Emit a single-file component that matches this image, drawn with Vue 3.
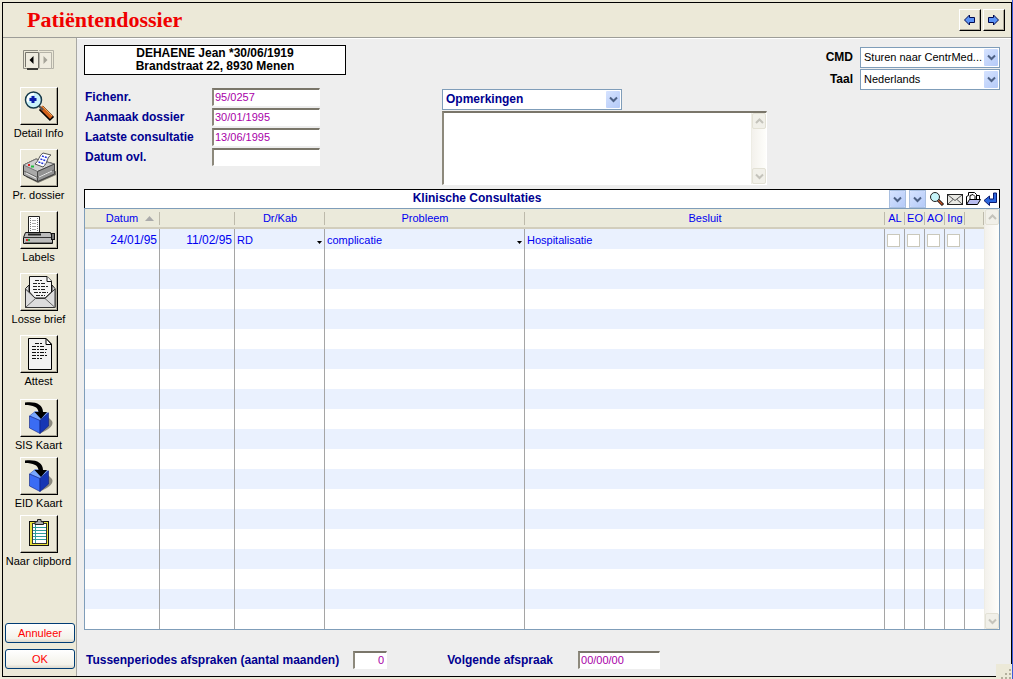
<script setup>
import { ref } from 'vue'

const cmd = ref('Sturen naar CentrMed...')
const taal = ref('Nederlands')
const topic = ref('Opmerkingen')
const notes = ref('')
const months = ref('0')
const nextVisit = ref('00/00/00')

const fields = ref([
  { id: 'fiche', label: 'Fichenr.', value: '95/0257' },
  { id: 'created', label: 'Aanmaak dossier', value: '30/01/1995' },
  { id: 'last', label: 'Laatste consultatie', value: '13/06/1995' },
  { id: 'ovl', label: 'Datum ovl.', value: '' },
])

const toolGroups = [
  [
    { icon: 'zoom', label: 'Detail Info' },
    { icon: 'printer', label: 'Pr. dossier' },
    { icon: 'labels', label: 'Labels' },
    { icon: 'letter', label: 'Losse brief' },
    { icon: 'page', label: 'Attest' },
  ],
  [
    { icon: 'cube', label: 'SIS Kaart' },
    { icon: 'cube', label: 'EID Kaart' },
    { icon: 'clip', label: 'Naar clipbord' },
  ],
]

const flags = ['AL', 'EO', 'AO', 'Ing']
const emptyRows = 19
</script>

<template>
  <div class="window">
    <div class="frame">
      <header class="titlebar">
        <h1>Patiëntendossier</h1>
        <div class="pager">
          <button class="raised" type="button" aria-label="Vorige">
            <svg width="14" height="14" viewBox="0 0 14 14"><path d="M1.500 7L6.500 2V4.500H11.500V9.500H6.500V12Z" fill="#5b93f5" stroke="#000a50" /></svg>
          </button>
          <button class="raised" type="button" aria-label="Volgende">
            <svg width="14" height="14" viewBox="0 0 14 14"><path d="M11.500 7L6.500 2V4.500H1.500V9.500H6.500V12Z" fill="#5b93f5" stroke="#000a50" /></svg>
          </button>
        </div>
      </header>

      <div class="body">
        <nav class="sidebar">
          <div class="book">
            <button type="button" aria-label="Vorige pagina">
              <svg width="16" height="20" viewBox="0 0 16 20">
                <path d="M15 .5H.5V18.500H4" fill="none" stroke="#8c8a80" />
                <path d="M2.500 17V2.500H15.500V18.500" fill="#efecdf" stroke="#77756c" />
                <path d="M4 19H15" stroke="#000" stroke-width="1.500" />
                <path d="M10.500 6V14L6.500 10Z" fill="#000" />
              </svg>
            </button>
            <button type="button" aria-label="Volgende pagina">
              <svg width="15" height="20" viewBox="0 0 15 20">
                <path d="M0 .5H14.500V18.500H11" fill="none" stroke="#b5b3a8" />
                <path d="M.5 18V2.500H12.500V18.500H.5" fill="#efecdf" stroke="#b5b3a8" />
                <path d="M4.500 6V14L8.500 10Z" fill="#a5a398" />
              </svg>
            </button>
          </div>

          <div v-for="(group, g) in toolGroups" :key="g" class="tools" :class="{ tight: g === 1 }">
            <div v-for="tool in group" :key="tool.label" class="tool">
              <button class="raised big" type="button" :aria-label="tool.label">
                <svg v-if="tool.icon === 'zoom'" width="36" height="36" viewBox="0 0 36 36">
                  <path d="M20 20L31 31" stroke="#000" stroke-width="6" />
                  <path d="M20 19L30.500 29.500" stroke="#d2601a" stroke-width="4" />
                  <path d="M21.500 18.500L31 28" stroke="#f6a04a" />
                  <path d="M17 17L22 22" stroke="#555" stroke-width="2" />
                  <circle cx="12.500" cy="12" r="8" fill="#c9f2fb" stroke="#16394a" stroke-width="1.500" />
                  <path d="M7 14A6 6 0 0 1 13 6" fill="none" stroke="#fff" stroke-width="2" />
                  <path d="M12 8V15M8.500 11.500H15.500" stroke="#0a1caa" stroke-width="3" />
                </svg>
                <svg v-else-if="tool.icon === 'printer'" width="36" height="36" viewBox="0 0 36 36">
                  <path d="M5 27L17 33L35 25V21Z" fill="#77756c" />
                  <path d="M2.500 15L15 9L33.500 14V24L16.500 31.500L2.500 25Z" fill="#a9a9a9" stroke="#333" />
                  <path d="M2.500 15L15 9L33.500 14L16.500 21.500Z" fill="#d0d0d0" stroke="#777" />
                  <path d="M16.500 21.500V31.500L33.500 24V14Z" fill="#929292" stroke="#444" />
                  <path d="M3 21L16.500 27.500L33 20" fill="none" stroke="#666" />
                  <path d="M5 23L15 28M18 27L31 21" stroke="#eee" />
                  <path d="M14 14C18 11 18 5 22 3L30 5C26 7 27 13 22 17Z" fill="#fff" stroke="#555" />
                  <path d="M21 6L27 8M19.500 9L25.500 11M17.500 12L23.500 14" stroke="#2434d8" stroke-width="1.500" stroke-dasharray="2 1" />
                  <path d="M7 15H9" stroke="#e02020" stroke-width="2" />
                  <path d="M10 16.500H13" stroke="#20c040" stroke-width="2" />
                </svg>
                <svg v-else-if="tool.icon === 'labels'" width="36" height="36" viewBox="0 0 36 36">
                  <path d="M7.500 21V4.500H18.500V21" fill="#fff" stroke="#222" />
                  <path d="M9.500 6V20M16.500 6V20" stroke="#777" stroke-dasharray="1 1" />
                  <path d="M11 8.500H15M11 11.500H15M11 14.500H15M11 17.500H15" stroke="#aaa" />
                  <path d="M4.500 20.500H29.500L31.500 25.500V31.500H2.500V25.500Z" fill="#bcbcbc" stroke="#111" />
                  <path d="M3 25.500H31" stroke="#333" />
                  <path d="M7 22.500H20" stroke="#222" stroke-width="2" />
                  <path d="M4 30.500H31" stroke="#777" />
                  <rect x="30.500" y="21.500" width="3" height="6" fill="#777" stroke="#111" />
                  <path d="M5 28H7" stroke="#e02020" stroke-width="2" />
                  <path d="M7 28H9" stroke="#20b040" stroke-width="2" />
                </svg>
                <svg v-else-if="tool.icon === 'letter'" width="36" height="36" viewBox="0 0 36 36">
                  <path d="M4.500 14.500L8 11V25H31V11L34 14.500V33.500H4.500Z" fill="#d8d8d8" stroke="#222" />
                  <path d="M8.500 18V2.500H26L30.500 7V18L24 24H14Z" fill="#f4f4f4" stroke="#111" />
                  <path d="M26 2.500V7.500H30.500" fill="#fff" stroke="#111" />
                  <path d="M14 6.500H22M12 9.500H24M12 12.500H27M12 15.500H25M13 18.500H27M15 21.500H24" stroke="#222" stroke-dasharray="4 1 2 1" />
                  <path d="M4.500 15L14.500 24.500H24L34 15V33.500H4.500Z" fill="#dcdcdc" stroke="#333" />
                  <path d="M5 33L14.500 24.500M33.500 33L24 24.500" stroke="#666" />
                </svg>
                <svg v-else-if="tool.icon === 'page'" width="36" height="36" viewBox="0 0 36 36">
                  <path d="M7.500 2.500H25L30.500 8V33.500H7.500Z" fill="#f1f1f1" stroke="#000" />
                  <path d="M25 2.500V8.500H30.500Z" fill="#fff" stroke="#000" />
                  <path d="M14 7.500H22M11 10.500H23M11 13.500H27M11 16.500H25M11 19.500H27M11 22.500H21" stroke="#111" stroke-dasharray="4 1 2 1" />
                </svg>
                <svg v-else-if="tool.icon === 'cube'" width="36" height="36" viewBox="0 0 36 36">
                  <path d="M26 16L31 21C33 25 29 29 20 33Z" fill="#8b897e" />
                  <path d="M8.500 16L14 11.500L27.500 13L19 20.500Z" fill="#79a8ff" stroke="#1a3cae" stroke-width=".5" />
                  <path d="M8.500 16L19 20.500V33.500L8.500 28Z" fill="#3a6cf4" stroke="#0b1f80" stroke-width=".6" />
                  <path d="M19 20.500L27.500 13V26L19 33.500Z" fill="#1636b4" stroke="#0b1f80" stroke-width=".6" />
                  <path d="M4 2.500C14 1 22 4 22 12H26L20 19L13.500 12H17.500C17 7 12 5 4 5Z" fill="#000" />
                </svg>
                <svg v-else width="36" height="36" viewBox="0 0 36 36">
                  <rect x="8.500" y="5.500" width="19" height="24" fill="#e8e03a" stroke="#111" />
                  <rect x="11.500" y="7.500" width="14" height="20" fill="#fff" stroke="#333" />
                  <path d="M12 11.500H25M12 14.500H25M12 17.500H25M12 20.500H25M12 23.500H25" stroke="#2f9c9c" />
                  <path d="M14.500 8V27" stroke="#2f9c9c" />
                  <path d="M14 8.500V6L16.500 5.500V3.500H20V5.500L22.500 6V8.500Z" fill="#aaa" stroke="#222" />
                </svg>
              </button>
              <span class="caption">{{ tool.label }}</span>
            </div>
          </div>

          <div class="actions">
            <button type="button">Annuleer</button>
            <button type="button">OK</button>
          </div>
        </nav>

        <main class="content">
          <section class="top">
            <div class="left">
              <div class="patient">DEHAENE Jean *30/06/1919<br>Brandstraat 22, 8930 Menen</div>
              <div class="fields">
                <div v-for="f in fields" :key="f.id" class="field">
                  <label :for="f.id">{{ f.label }}</label>
                  <input :id="f.id" v-model="f.value" class="sunken" type="text">
                </div>
              </div>
            </div>

            <div class="remarks">
              <div class="combo bold">
                <select v-model="topic" aria-label="Rubriek"><option>Opmerkingen</option></select>
                <span class="drop"><svg width="9" height="7" viewBox="0 0 9 7"><path d="M1 1.500L4.500 5L8 1.500" /></svg></span>
              </div>
              <div class="memo">
                <textarea v-model="notes" aria-label="Opmerkingen"></textarea>
                <div class="scroll">
                  <button type="button" aria-label="Omhoog"><svg width="9" height="7" viewBox="0 0 9 7"><path d="M1 5L4.500 1.500L8 5" /></svg></button>
                  <button type="button" aria-label="Omlaag"><svg width="9" height="7" viewBox="0 0 9 7"><path d="M1 1.500L4.500 5L8 1.500" /></svg></button>
                </div>
              </div>
            </div>

            <div class="settings">
              <label for="cmd">CMD</label>
              <div class="combo">
                <select id="cmd" v-model="cmd"><option>Sturen naar CentrMed...</option></select>
                <span class="drop"><svg width="9" height="7" viewBox="0 0 9 7"><path d="M1 1.500L4.500 5L8 1.500" /></svg></span>
              </div>
              <label for="taal">Taal</label>
              <div class="combo">
                <select id="taal" v-model="taal"><option>Nederlands</option></select>
                <span class="drop"><svg width="9" height="7" viewBox="0 0 9 7"><path d="M1 1.500L4.500 5L8 1.500" /></svg></span>
              </div>
            </div>
          </section>

          <section class="consults">
            <div class="caption-bar">
              <h2>Klinische Consultaties</h2>
              <div class="icons">
                <button v-for="n in 2" :key="n" type="button" class="menu" :aria-label="'Menu ' + n">
                  <span class="drop"><svg width="9" height="7" viewBox="0 0 9 7"><path d="M1 1.500L4.500 5L8 1.500" /></svg></span>
                </button>
                <button type="button" aria-label="Zoeken">
                  <svg width="16" height="16" viewBox="0 0 16 16">
                    <path d="M9 9L14 14" stroke="#000" stroke-width="3" /><path d="M9 9L13.500 13.500" stroke="#c8562a" stroke-width="1.500" />
                    <circle cx="6" cy="6" r="4.500" fill="#c5f4fa" stroke="#222" />
                  </svg>
                </button>
                <button type="button" aria-label="Mail">
                  <svg width="16" height="16" viewBox="0 0 16 16">
                    <rect x=".5" y="3.500" width="15" height="10" fill="#e9e9e4" stroke="#222" />
                    <path d="M1 4L8 9.500L15 4M1 13L6 8.500M15 13L10 8.500" fill="none" stroke="#555" />
                  </svg>
                </button>
                <button type="button" aria-label="Map">
                  <svg width="16" height="16" viewBox="0 0 16 16">
                    <path d="M1.500 13.500V5.500L3.500 4.500V1.500H9.500L11.500 3.500V8" fill="#fff" stroke="#000" />
                    <path d="M5 6.500V4.500L8 3.500L10 5.500V9H5Z" fill="#fff" stroke="#000" />
                    <path d="M1.500 13.500L4.500 8.500H15.500L12.500 13.500Z" fill="#b9bdf0" stroke="#000" />
                    <path d="M12 4.500H14.500V8" fill="none" stroke="#000" />
                  </svg>
                </button>
                <button type="button" aria-label="Terug">
                  <svg width="16" height="16" viewBox="0 0 16 16">
                    <path d="M1 9.500L6.500 5V8H10.500V2H13.500V11.500H6.500V14.500Z" fill="#2b66dd" stroke="#0a1a70" />
                  </svg>
                </button>
              </div>
            </div>

            <div class="grid">
              <table>
                <colgroup>
                  <col class="c-date"><col class="c-date"><col class="c-dr"><col class="c-prob"><col>
                  <col v-for="n in 4" :key="n" class="c-flag"><col class="c-end">
                </colgroup>
                <thead>
                  <tr>
                    <th class="sorted">Datum <svg class="sort" width="9" height="5" viewBox="0 0 9 5"><path d="M0 5L4.500 0L9 5Z" fill="#aaa" /></svg></th>
                    <th></th>
                    <th>Dr/Kab</th>
                    <th>Probleem</th>
                    <th>Besluit</th>
                    <th v-for="f in flags" :key="f">{{ f }}</th>
                    <th></th>
                  </tr>
                </thead>
                <tbody>
                  <tr>
                    <td class="num">24/01/95</td>
                    <td class="num">11/02/95</td>
                    <td><div class="pick">RD <svg width="5" height="3" viewBox="0 0 5 3"><path d="M0 0H5L2.500 3Z" /></svg></div></td>
                    <td><div class="pick">complicatie <svg width="5" height="3" viewBox="0 0 5 3"><path d="M0 0H5L2.500 3Z" /></svg></div></td>
                    <td>Hospitalisatie</td>
                    <td v-for="f in flags" :key="f" class="flag"><input type="checkbox" :aria-label="f"></td>
                    <td></td>
                  </tr>
                  <tr v-for="r in emptyRows" :key="r">
                    <td v-for="c in 10" :key="c"></td>
                  </tr>
                </tbody>
              </table>
              <div class="scroll">
                <button type="button" aria-label="Omhoog"><svg width="9" height="7" viewBox="0 0 9 7"><path d="M1 5L4.500 1.500L8 5" /></svg></button>
                <button type="button" aria-label="Omlaag"><svg width="9" height="7" viewBox="0 0 9 7"><path d="M1 1.500L4.500 5L8 1.500" /></svg></button>
              </div>
            </div>
          </section>

          <footer class="bottom">
            <label for="months">Tussenperiodes afspraken (aantal maanden)</label>
            <input id="months" v-model="months" class="sunken months" type="text">
            <label for="next">Volgende afspraak</label>
            <input id="next" v-model="nextVisit" class="sunken next" type="text">
          </footer>
        </main>
      </div>
    </div>
    <svg class="grip" width="16" height="15" viewBox="0 0 16 15">
      <path d="M13 5h2v2h-2zM9 9h2v2h-2zM13 9h2v2h-2zM5 13h2v2h-2zM9 13h2v2h-2zM13 13h2v2h-2z" fill="#b3af9c" />
    </svg>
  </div>
</template>

<style>
body {
  background: #ece9d8;
}
</style>

<style scoped>
.window,
.window * {
  box-sizing: border-box;
}

.window {
  position: relative;
  display: flex;
  min-height: 100vh;
  padding: 2px 0 2px 2px;
  border-right: 1px solid #3c5bd8;
  background: #ece9d8;
  font-family: "Liberation Sans", Arial, sans-serif;
  font-size: 11px;
  line-height: 13px;
  color: #000;
}

button,
input,
select,
textarea {
  margin: 0;
  padding: 0;
  border: 0;
  border-radius: 0;
  background: none;
  font: inherit;
  color: inherit;
}

svg {
  display: block;
}

.frame {
  flex: 1;
  display: flex;
  flex-direction: column;
  border: 1px solid #000;
}

.titlebar {
  display: flex;
  justify-content: space-between;
  align-items: center;
  height: 35px;
  padding: 0 6px 0 24px;
  border-bottom: 1px solid #9d9d98;
}

h1 {
  margin: 0;
  font: bold 22px/26px "Liberation Serif", "Times New Roman", serif;
  color: #f00000;
}

.pager {
  display: flex;
  gap: 2px;
}

.raised {
  display: flex;
  align-items: center;
  justify-content: center;
  width: 22px;
  height: 22px;
  border: 1px solid #fff;
  border-right-color: #000;
  border-bottom-color: #000;
  background: #ece9d8;
  box-shadow: inset -1px -1px 0 #aca899;
}

.raised.big {
  width: 38px;
  height: 38px;
}

.body {
  flex: 1;
  display: flex;
}

.sidebar {
  display: flex;
  flex-direction: column;
  width: 74px;
  padding: 12px 1px 7px 2px;
  border-right: 1px solid #a8a8a4;
}

.book {
  display: flex;
  height: 20px;
  margin: 0 0 17px 18px;
}

.tools {
  display: flex;
  flex-direction: column;
  gap: 8px;
  padding-right: 3px;
}

.tools.tight {
  gap: 4px;
  margin-top: 10px;
}

.tool {
  display: flex;
  flex-direction: column;
  align-items: center;
}

.caption {
  line-height: 16px;
  white-space: nowrap;
}

.actions {
  display: flex;
  flex-direction: column;
  gap: 6px;
  margin-top: auto;
}

.actions button {
  height: 20px;
  border: 1px solid #003c74;
  border-radius: 3px;
  background: linear-gradient(#fff, #f3f2ea 80%, #dcd8cc);
  line-height: 16px;
  color: #f00;
}

.content {
  flex: 1;
  min-width: 0;
  padding: 6px 11px 7px 7px;
  border-top: 1px solid #fff;
  background: #eeeeee;
}

.top {
  display: flex;
  height: 144px;
}

.left {
  flex: 0 0 262px;
}

.patient {
  height: 30px;
  padding-top: 1px;
  border: 1px solid #000;
  background: #fff;
  font-size: 12px;
  font-weight: bold;
  text-align: center;
}

.fields {
  display: grid;
  gap: 2px;
  margin-top: 13px;
}

.field {
  display: flex;
  align-items: center;
  height: 18px;
}

.field label {
  flex: 0 0 128px;
  padding-left: 1px;
}

.field label,
.bottom label {
  font-size: 12px;
  font-weight: bold;
  color: #000090;
}

.sunken {
  width: 108px;
  height: 18px;
  padding: 0 2px 1px 1px;
  border: 1px solid #fff;
  border-top: 2px solid #7a766a;
  border-left: 2px solid #8d897c;
  background: #fff;
  color: #a800a8;
}

.remarks {
  flex: 0 0 325px;
  margin: 44px auto 0 96px;
}

.remarks .combo {
  width: 180px;
}

.combo {
  display: grid;
  align-items: center;
  height: 21px;
  border: 1px solid #7f9db9;
  background: #fff;
}

.combo select {
  grid-area: 1 / 1;
  width: 100%;
  height: 19px;
  padding: 0 15px 0 3px;
  appearance: none;
  outline: none;
}

.combo .drop {
  grid-area: 1 / 1;
  justify-self: end;
  pointer-events: none;
}

.combo.bold select {
  font-size: 12px;
  font-weight: bold;
  color: #000090;
}

.drop {
  display: flex;
  align-items: center;
  justify-content: center;
  width: 14px;
  height: 17px;
  margin-right: 1px;
  border-radius: 1px;
  background: linear-gradient(135deg, #d6e3ff, #b4caf8);
}

.drop path {
  fill: none;
  stroke: #4d6185;
  stroke-width: 2;
}

.memo {
  display: flex;
  height: 74px;
  margin-top: 1px;
  border: 1px solid #fff;
  border-top: 2px solid #7a766a;
  border-left: 2px solid #8d897c;
  background: #fff;
}

.memo textarea {
  flex: 1;
  resize: none;
  outline: none;
}

.scroll {
  flex: 0 0 15px;
  display: flex;
  flex-direction: column;
  justify-content: space-between;
  border-left: 1px solid #eeede5;
  background: linear-gradient(90deg, #f3f1ec, #fefefb);
}

.scroll button {
  display: flex;
  align-items: center;
  justify-content: center;
  height: 16px;
  border: 1px solid #e3e1d5;
  border-radius: 2px;
  background: #f1f0e9;
}

.scroll path {
  fill: none;
  stroke: #c4c3bb;
  stroke-width: 2;
}

.settings {
  display: grid;
  grid-template-columns: auto 140px;
  gap: 1px 7px;
  align-content: start;
  align-items: center;
  padding-top: 2px;
}

.settings label {
  font-size: 12px;
  font-weight: bold;
  text-align: right;
}

.caption-bar {
  display: flex;
  align-items: center;
  height: 19px;
  border: 1px solid #000;
  border-bottom: 0;
  background: #fff;
}

h2 {
  flex: 1;
  margin: 0;
  padding: 0 20px 1px 0;
  font-size: 12px;
  font-weight: bold;
  line-height: 13px;
  text-align: center;
  color: #000090;
}

.icons {
  display: flex;
  gap: 2px;
  align-items: center;
}

.icons .menu {
  margin-right: 1px;
  border: 1px solid #a9bfe0;
}

.icons .menu .drop {
  width: 15px;
  height: 16px;
  margin: 0;
}

.grid {
  display: flex;
  align-items: stretch;
  border: 1px solid #7f9db9;
  background: #fff;
}

table {
  flex: 1;
  min-width: 0;
  border-collapse: separate;
  border-spacing: 0;
  table-layout: fixed;
  color: #0000f0;
}

.c-date {
  width: 75px;
}

.c-dr {
  width: 90px;
}

.c-prob {
  width: 200px;
}

.c-flag {
  width: 20px;
}

.c-end {
  width: 19px;
}

th {
  height: 20px;
  padding: 1px 0 0;
  border-bottom: 2px solid #d2cebd;
  background: linear-gradient(90deg, transparent calc(100% - 1px), #bdbaab 0) 0 3px / 100% 13px no-repeat #ebeadb;
  font-weight: normal;
  white-space: nowrap;
}

th.sorted {
  padding-left: 15px;
}

th .sort {
  display: inline-block;
  margin-left: 4px;
  vertical-align: 1px;
}

td {
  height: 20px;
  padding: 3px 2px 0;
  border-right: 1px solid #a5a5a5;
}

th:last-child,
td:last-child {
  border-right: 0;
}

tbody tr:nth-child(odd) {
  background: #eaf1fe;
}

.num {
  font-size: 12px;
  text-align: right;
}

.pick {
  display: flex;
  align-items: center;
  justify-content: space-between;
}

.pick svg {
  margin-top: 3px;
}

.flag input {
  display: block;
  width: 13px;
  height: 13px;
  border: 1px solid #cac8bb;
  background: #fff;
  appearance: none;
}

.bottom {
  display: flex;
  align-items: center;
  padding: 21px 0 0 2px;
}

.months {
  width: 34px;
  margin: 0 60px 0 14px;
  text-align: right;
}

.next {
  width: 82px;
  margin-left: 25px;
}

.grip {
  position: absolute;
  right: 0;
  bottom: 0;
  background: #ece9d8;
}
</style>
